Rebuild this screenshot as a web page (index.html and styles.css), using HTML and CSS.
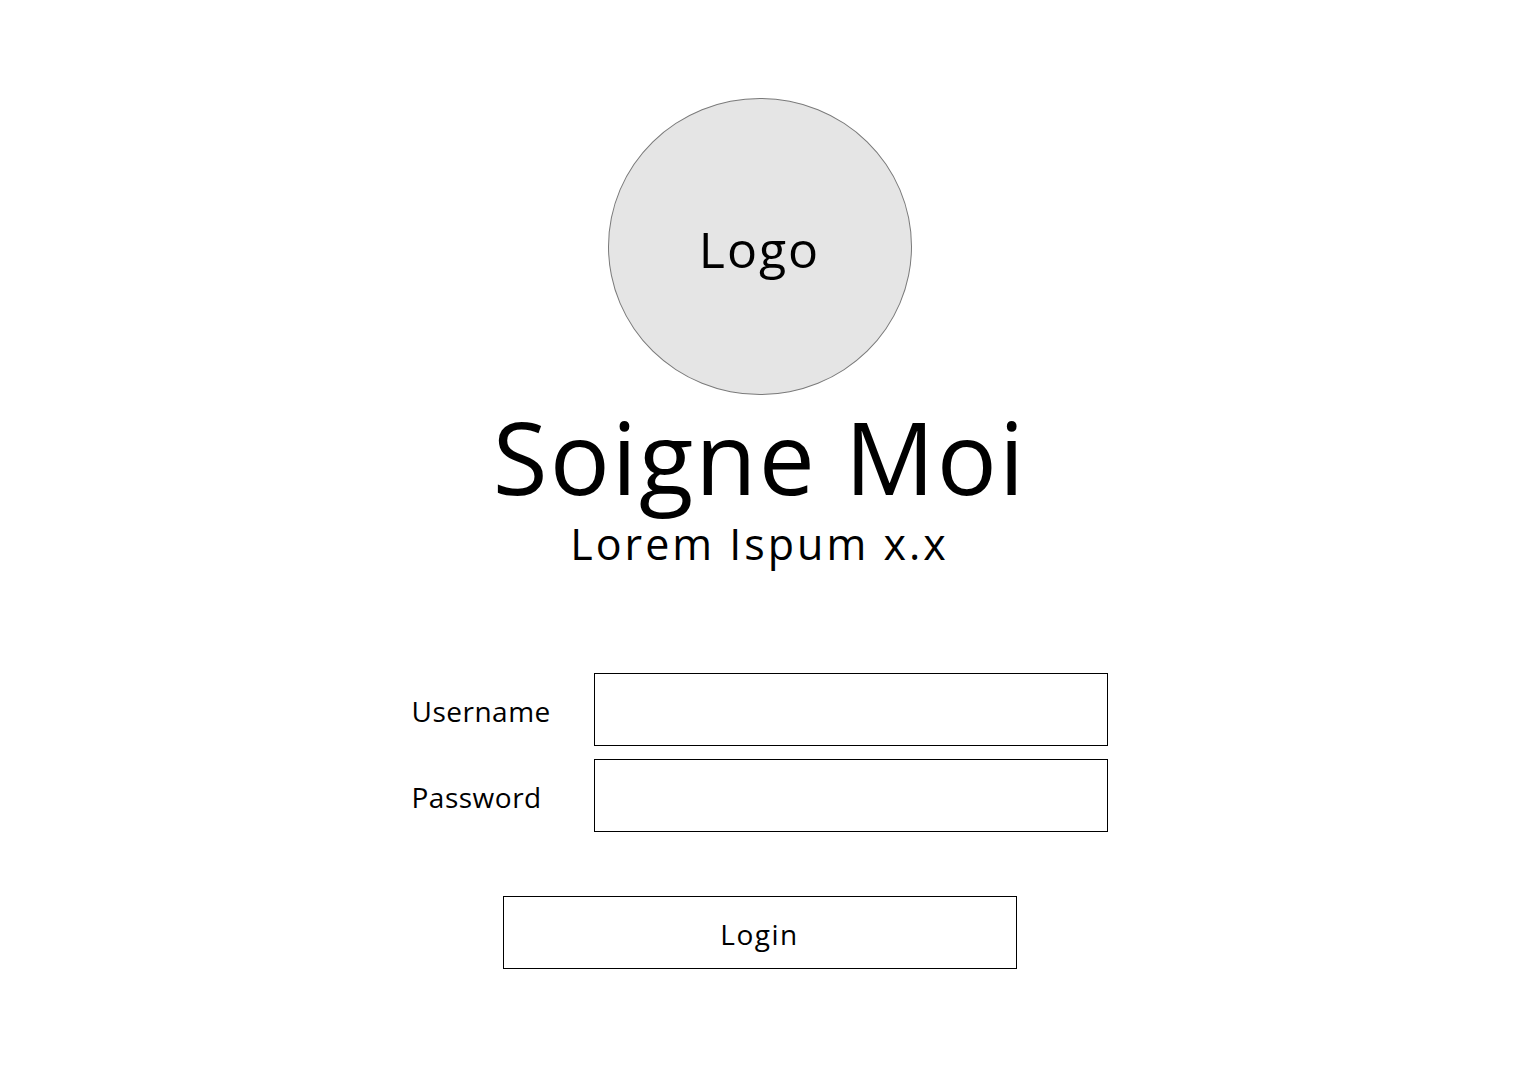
FILE: index.html
```html
<!DOCTYPE html>
<html>

<head>
    <title>Soigne Moi - Login</title>
    <link rel="stylesheet" href="styles.css">
</head>

<body>
    <div class="page">
        <div class="logo"><span>Logo</span></div>
        <h1 class="title">Soigne Moi</h1>
        <p class="subtitle">Lorem Ispum x.x</p>

        <form class="login">
            <div class="row">
                <label for="user">Username</label>
                <input id="user" type="text">
            </div>
            <div class="row">
                <label for="pass">Password</label>
                <input id="pass" type="password">
            </div>
            <button type="button" class="btn">Login</button>
        </form>
    </div>
</body>

</html>
```

FILE: styles.css
```css
body {
    margin: 0px;
    background-color: white;
    font-family: 'Open Sans', 'Noto Sans', sans-serif;
    color: black;
}

.page {
    display: flex;
    flex-direction: column;
    align-items: center;
    padding-top: 98px;
}

.logo {
    width: 304px;
    height: 297px;
    box-sizing: border-box;
    border: 1px solid #7a7a7a;
    border-radius: 50%;
    background-color: #e5e5e5;
    display: flex;
    align-items: center;
    justify-content: center;
    font-size: 50px;
    line-height: 1;
    letter-spacing: 2px;
}

.logo span {
    padding-top: 4px;
}

.title {
    margin: 6px 0px 0px 0px;
    font-size: 100px;
    font-weight: normal;
    line-height: 1.1;
    letter-spacing: 2px;
}

.subtitle {
    margin: 11px 0px 0px 0px;
    font-size: 43px;
    line-height: 1;
    letter-spacing: 3px;
}

.login {
    margin-top: 108px;
    display: flex;
    flex-direction: column;
    align-items: center;
}

.row {
    display: flex;
    align-items: center;
    margin-bottom: 13px;
}

.row>label {
    width: 182px;
    font-size: 28px;
    line-height: 1;
    padding-top: 3px;
    letter-spacing: 0.5px;
}

.row>input {
    width: 514px;
    height: 73px;
    box-sizing: border-box;
    border: 1px solid black;
    margin: 0px;
    padding: 0px 10px;
    font-family: 'Open Sans', sans-serif;
    font-size: 24px;
}

.btn {
    margin-top: 51px;
    width: 514px;
    height: 73px;
    box-sizing: border-box;
    border: 1px solid black;
    background-color: white;
    color: black;
    font-family: 'Open Sans', 'Noto Sans', sans-serif;
    font-size: 28px;
    line-height: 1;
    letter-spacing: 1.5px;
    padding: 3px 0px 0px 0px;
}
```
